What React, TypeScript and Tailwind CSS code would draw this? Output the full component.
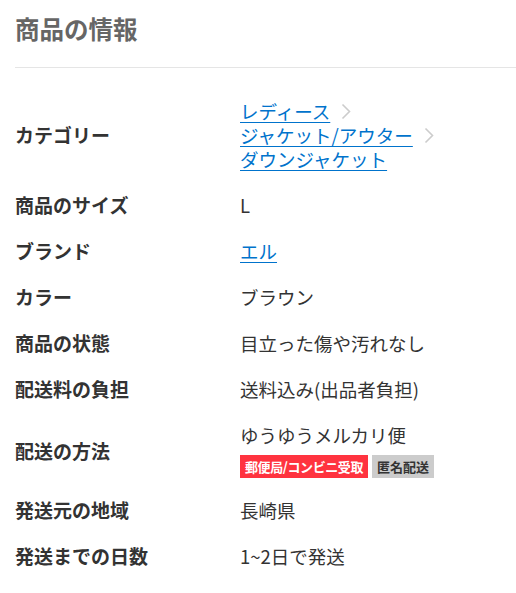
import React from 'react'

const Chevron: React.FC = () => (
  <svg width="10" height="17" viewBox="0 0 10 17" className="ml-[11px] shrink-0" fill="none">
    <path d="M1.5 1.5 L8.5 8.5 L1.5 15.5" stroke="#cccccc" strokeWidth="1.6" />
  </svg>
)

type Row = { label: string; value: React.ReactNode; className?: string }

const rows: Row[] = [
  {
    label: 'カテゴリー',
    value: (
      <div className="flex flex-col">
        <div className="flex items-center">
          <a href="#" className="text-[#0073cc] underline underline-offset-[3px]">レディース</a>
          <Chevron />
        </div>
        <div className="flex items-center">
          <a href="#" className="text-[#0073cc] underline underline-offset-[3px]">ジャケット/アウター</a>
          <Chevron />
        </div>
        <div className="flex items-center">
          <a href="#" className="text-[#0073cc] underline underline-offset-[3px]">ダウンジャケット</a>
        </div>
      </div>
    ),
  },
  { label: '商品のサイズ', value: 'L' },
  {
    label: 'ブランド',
    value: (
      <a href="#" className="text-[#0073cc] underline underline-offset-[3px]">エル</a>
    ),
  },
  { label: 'カラー', value: 'ブラウン' },
  { label: '商品の状態', value: '目立った傷や汚れなし' },
  { label: '配送料の負担', value: '送料込み(出品者負担)' },
  {
    label: '配送の方法',
    className: 'pb-[9px]',
    value: (
      <div>
        <div>ゆうゆうメルカリ便</div>
        <div className="mt-2 flex gap-[4px]">
          <span className="h-[23px] px-[5px] bg-[#ff333f] text-white text-[13px] leading-[23px] font-bold tracking-[-0.4px]">
            郵便局/コンビニ受取
          </span>
          <span className="h-[23px] px-[5px] bg-[#cccccc] text-[#333] text-[13px] leading-[23px] font-bold">
            匿名配送
          </span>
        </div>
      </div>
    ),
  },
  { label: '発送元の地域', value: '長崎県' },
  { label: '発送までの日数', value: '1~2日で発送' },
]

const App: React.FC = () => {
  return (
    <div
      className="bg-white w-[516px] min-h-[593px] pl-[15px] pt-[13px] text-[#333]"
      style={{ fontFamily: '"Noto Sans CJK JP", "Noto Sans", sans-serif' }}
    >
      <h2 className="text-[24.5px] leading-[32px] font-bold text-[#666] pb-[22px] border-b border-[#e5e5e5]">
        商品の情報
      </h2>
      <div className="mt-[20px]">
        {rows.map((row) => (
          <div key={row.label} className={`flex items-center py-[11px] leading-[24px] ${row.className ?? ''}`}>
            <div className="w-[225px] shrink-0 font-bold text-[19px]">{row.label}</div>
            <div className="flex-1 text-[18.5px]">{row.value}</div>
          </div>
        ))}
      </div>
    </div>
  )
}

export default App
